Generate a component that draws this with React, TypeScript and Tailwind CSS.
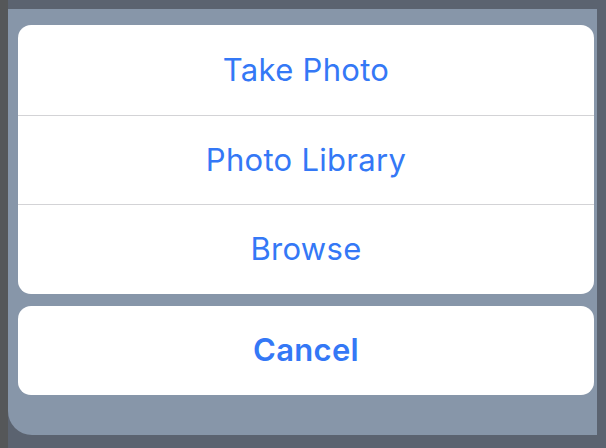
export default function App() {
  const rows = ["Take Photo", "Photo Library", "Browse"];

  return (
    <div className="relative h-[448px] w-[606px] overflow-hidden bg-[#5b6370] font-['Inter',sans-serif]">
      <div className="absolute left-0 top-0 h-full w-[8px] bg-[#555759]" />
      <div className="ml-[8px] mt-[9px] flex h-[426px] w-[589px] flex-col rounded-bl-[24px] bg-[#8796a9] pl-[10px] pr-[3px] pt-[16px]">
        <div className="flex flex-col overflow-hidden rounded-[13px] bg-white">
          {rows.map((label, i) => (
            <div
              key={label}
              className={
                "flex h-[89.7px] items-center justify-center text-[31px] tracking-[0.3px] text-[#3478f6] " +
                (i > 0 ? "border-t border-[#d3d3d6]" : "")
              }
            >
              {label}
            </div>
          ))}
        </div>
        <div className="mt-[12px] flex h-[89px] items-center justify-center rounded-[13px] bg-white text-[31px] font-semibold tracking-[0.3px] text-[#3478f6]">
          Cancel
        </div>
      </div>
    </div>
  );
}
